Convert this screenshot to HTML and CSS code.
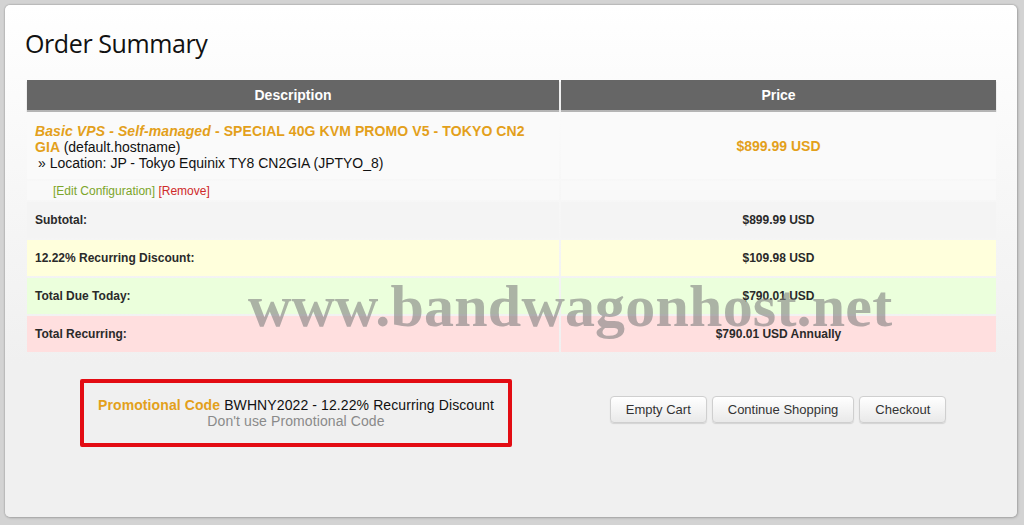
FILE: index.html
```html
<!DOCTYPE html>
<html lang="en">
<head>
<meta charset="utf-8">
<title>Order Summary</title>
<link rel="stylesheet" href="styles.css">
</head>
<body>
<div class="card">
  <h1 class="title">Order Summary</h1>
  <table class="cart">
    <colgroup><col class="c1"><col class="c2"></colgroup>
    <thead>
      <tr><th>Description</th><th>Price</th></tr>
    </thead>
    <tbody>
      <tr class="product">
        <td class="desc">
          <div class="pname"><em>Basic VPS - Self-managed</em> - SPECIAL 40G KVM PROMO V5 - TOKYO CN2 GIA <span class="host">(default.hostname)</span></div>
          <div class="loc">&raquo; Location: JP - Tokyo Equinix TY8 CN2GIA (JPTYO_8)</div>
        </td>
        <td class="pprice">$899.99 USD</td>
      </tr>
      <tr class="edit">
        <td><span class="editlink">[Edit Configuration]</span> <span class="remove">[Remove]</span></td>
        <td></td>
      </tr>
      <tr class="sum sub"><td>Subtotal:</td><td class="val">$899.99 USD</td></tr>
      <tr class="sum disc"><td>12.22% Recurring Discount:</td><td class="val">$109.98 USD</td></tr>
      <tr class="sum due"><td>Total Due Today:</td><td class="val">$790.01 USD</td></tr>
      <tr class="sum rec"><td>Total Recurring:</td><td class="val">$790.01 USD Annually</td></tr>
    </tbody>
  </table>
  <div class="bottom">
    <div class="promo-col">
      <div class="promo">
        <div><span class="plabel">Promotional Code</span> BWHNY2022 - 12.22% Recurring Discount</div>
        <div class="nouse">Don't use Promotional Code</div>
      </div>
    </div>
    <div class="actions">
      <button class="btn">Empty Cart</button>
      <button class="btn">Continue Shopping</button>
      <button class="btn">Checkout</button>
    </div>
  </div>
  <div class="watermark">www.bandwagonhost.net</div>
</div>
</body>
</html>
```

FILE: styles.css
```css
* { box-sizing: border-box; }
html, body { margin: 0; padding: 0; }
body {
  background: #d3d3d3;
  width: 1024px;
  height: 525px;
  padding: 5px 7px 8px 5px;
  font-family: "Liberation Sans", Arial, sans-serif;
  overflow: hidden;
}
.card {
  position: relative;
  width: 1012px;
  height: 512px;
  border-radius: 5px;
  background: linear-gradient(#ffffff 0%, #f6f6f6 40%, #f0f0f0 70%, #f0f0f0 100%);
  box-shadow: 0 0 2px rgba(0,0,0,0.35), 1px 1px 3px rgba(0,0,0,0.15);
  padding: 21px 19px 0 20px;
}
.title {
  margin: 0;
  font-family: "Open Sans", sans-serif;
  font-weight: 400;
  font-size: 25px;
  line-height: 34px;
  height: 52px;
  color: #111;
  letter-spacing: -0.4px;
}
.cart {
  width: 973px;
  table-layout: fixed;
  border-collapse: separate;
  border-spacing: 2px;
  font-size: 14px;
}
.c1 { width: 532px; }
.c2 { width: 435px; }
.cart th {
  background: #666666;
  color: #fff;
  font-weight: bold;
  font-size: 14px;
  height: 30px;
  padding: 0;
  text-align: center;
  box-shadow: 0 2px 1px rgba(0,0,0,0.28);
}
.cart td { padding: 0 8px; vertical-align: middle; }
.product td { background: #fafafa; height: 67px; padding-top: 3px; }
.product td.pprice { padding-top: 0; }
.desc { line-height: 16px; }
.pname { color: #e3a01b; font-weight: bold; max-width: 496px; letter-spacing: 0.1px; }
.pname em { font-style: italic; }
.host { color: #111; font-weight: normal; letter-spacing: 0; }
.loc { color: #111; padding-left: 3px; }
.pprice { text-align: center; color: #e3a01b; font-weight: bold; }
.edit td { background: #f9f9f9; height: 19px; font-size: 12px; }
.edit td:first-child { padding-left: 26px; }
.editlink { color: #7ca52a; }
.remove { color: #cf2a2a; }
.sum td { height: 36px; font-size: 12px; font-weight: bold; color: #2a2a2a; }
.sum .val { text-align: center; }
.sub td { background: #f4f4f4; }
.disc td { background: #ffffdc; }
.due td { background: #ebffdc; }
.rec td { background: #ffdfdf; }
.bottom {
  display: grid;
  grid-template-columns: 534px 435px;
  margin-top: 25px;
}
.promo-col { padding-left: 55px; }
.promo {
  width: 432px;
  height: 68px;
  border: 4px solid #e30c13;
  border-radius: 2px;
  text-align: center;
  font-size: 14px;
  line-height: 16px;
  color: #111;
  padding-top: 14px;
  letter-spacing: 0.1px;
}
.plabel { color: #e3a01b; font-weight: bold; }
.nouse { color: #8a8a8a; }
.actions {
  display: flex;
  justify-content: center;
  gap: 5px;
  padding-top: 17px;
  padding-left: 3px;
}
.btn {
  height: 27px;
  padding: 0 15px;
  font-family: "Liberation Sans", Arial, sans-serif;
  font-size: 13px;
  color: #333;
  border: 1px solid #cfcfcf;
  border-radius: 4px;
  background: linear-gradient(#ffffff, #e9e9e9);
  box-shadow: 0 1px 1px rgba(0,0,0,0.12);
}
.watermark {
  position: absolute;
  left: 243px;
  top: 271px;
  font-family: "Liberation Serif", "Times New Roman", serif;
  font-weight: bold;
  font-size: 60px;
  line-height: 60px;
  letter-spacing: 0.2px;
  color: rgba(128,128,128,0.6);
  white-space: nowrap;
  pointer-events: none;
}
```
